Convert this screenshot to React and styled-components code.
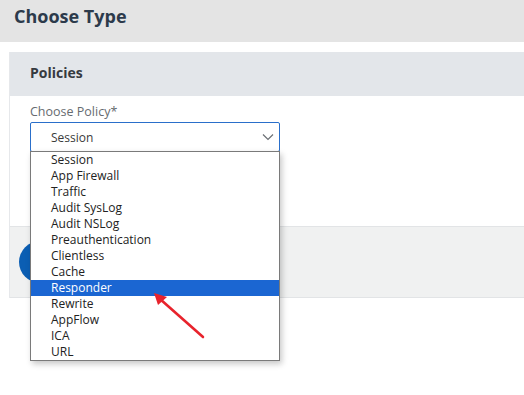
import React, { useState } from 'react'
import styled, { createGlobalStyle } from 'styled-components'

const GlobalStyle = createGlobalStyle`
  html, body {
    margin: 0;
    padding: 0;
    background: #fff;
    font-family: "Open Sans", "Noto Sans", Arial, sans-serif;
  }
`

const Page = styled.div`
  width: 524px;
  height: 395px;
  overflow: hidden;
  position: relative;
`

const TitleBar = styled.header`
  height: 42px;
  background: #e4e4e4;
  padding: 0 14px;
  display: flex;
  align-items: center;
  box-sizing: border-box;
  margin-bottom: 10px;
  h1 {
    margin: 0 0 10px;
    font-size: 18px;
    font-weight: 700;
    color: #2c3a4b;
  }
`

const Panel = styled.section`
  margin-left: 9px;
  border-left: 1px solid #e6e8eb;
`

const PanelHead = styled.div`
  height: 44px;
  background: #e3e6ea;
  padding: 0 0 3px 20px;
  box-sizing: border-box;
  display: flex;
  align-items: center;
  font-size: 14px;
  font-weight: 700;
  color: #363a3f;
`

const PanelBody = styled.div`
  height: 130px;
  padding: 7px 0 0 20px;
  box-sizing: border-box;
`

const Label = styled.label`
  display: block;
  font-size: 12.5px;
  color: #666b70;
  line-height: 18px;
  margin-bottom: 1px;
`

const SelectWrap = styled.div`
  position: relative;
  width: 250px;
`

const SelectBox = styled.div`
  height: 30px;
  box-sizing: border-box;
  border: 1px solid #2a6fca;
  border-radius: 2px;
  padding: 0 0 0 20px;
  display: flex;
  align-items: center;
  justify-content: space-between;
  font-size: 12px;
  color: #3a3a3a;
  background: #fff;
  svg {
    margin-right: 5px;
  }
`

const List = styled.ul`
  position: absolute;
  top: 29px;
  left: 0;
  width: 250px;
  box-sizing: border-box;
  margin: 0;
  padding: 0;
  list-style: none;
  background: #fff;
  border: 1px solid #7a7a7a;
  box-shadow: 2px 3px 6px rgba(0, 0, 0, 0.22);
  z-index: 5;
`

const Option = styled.li`
  height: 16px;
  line-height: 16px;
  padding-left: 20px;
  font-size: 12px;
  color: ${p => (p.active ? '#fff' : '#222')};
  background: ${p => (p.active ? '#1b66d2' : 'transparent')};
`

const Footer = styled.div`
  height: 72px;
  box-sizing: border-box;
  background: #f0f1f1;
  border-top: 1px solid #e2e4e6;
  border-bottom: 1px solid #e2e4e6;
  display: flex;
  align-items: center;
  padding-left: 9px;
`

const ContinueButton = styled.button`
  height: 42px;
  width: 110px;
  border: none;
  border-radius: 21px;
  background: #0b5eb3;
`

const Arrow = styled.svg`
  position: absolute;
  left: 0;
  top: 0;
  z-index: 6;
  pointer-events: none;
`

const options = [
  'Session',
  'App Firewall',
  'Traffic',
  'Audit SysLog',
  'Audit NSLog',
  'Preauthentication',
  'Clientless',
  'Cache',
  'Responder',
  'Rewrite',
  'AppFlow',
  'ICA',
  'URL'
]

const Chevron = () => (
  <svg width="12" height="8" viewBox="0 0 12 8">
    <path d="M1 1.5 L6 6.5 L11 1.5" fill="none" stroke="#6b6f74" strokeWidth="1.2" />
  </svg>
)

const App = () => {
  const [hover] = useState('Responder')
  return (
    <Page>
      <GlobalStyle />
      <TitleBar>
        <h1>Choose Type</h1>
      </TitleBar>
      <Panel>
        <PanelHead>Policies</PanelHead>
        <PanelBody>
          <Label>Choose Policy*</Label>
          <SelectWrap>
            <SelectBox>
              <span>Session</span>
              <Chevron />
            </SelectBox>
            <List>
              {options.map(o => (
                <Option key={o} active={o === hover}>
                  {o}
                </Option>
              ))}
            </List>
          </SelectWrap>
        </PanelBody>
        <Footer>
          {/* label hidden behind the open dropdown in the screenshot */}
          <ContinueButton aria-label="Continue" />
        </Footer>
      </Panel>
      <Arrow width="524" height="395">
        <line x1="203" y1="337" x2="160" y2="299" stroke="#e8232c" strokeWidth="2.6" strokeLinecap="round" />
        <path d="M154 293 L167 297 L158 305 Z" fill="#e8232c" />
      </Arrow>
    </Page>
  )
}

export default App
